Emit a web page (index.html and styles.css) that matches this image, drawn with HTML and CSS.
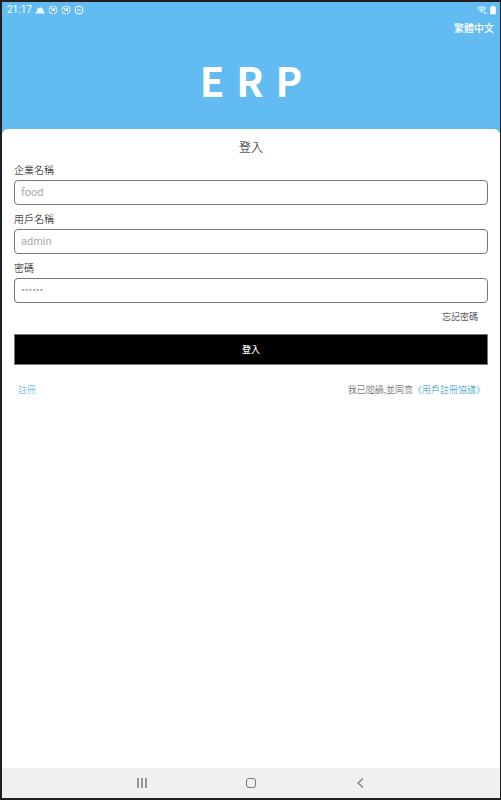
FILE: index.html
```html
<!DOCTYPE html>
<html lang="zh-Hant">
<head>
    <meta charset="UTF-8">
    <meta name="viewport" content="width=device-width, initial-scale=1.0">
    <title>ERP - 登入</title>
    <link rel="stylesheet" href="styles.css">
</head>
<body>

<div class="screen">
    <header class="header">
        <div class="status-bar">
            <div class="status-left">
                <span class="time">21:17</span>
                <svg class="status-icon" viewBox="0 0 10 10">
                    <path d="M1 8.500h8.500V6.500L8 6 8 3 6.500 3.500 5 1.500 4 3.500 2 3l.5 3L.5 7z" fill="#fff" opacity=".85"/>
                </svg>
                <svg class="status-icon" viewBox="0 0 10 10" fill="none" stroke="#fff">
                    <circle cx="5" cy="5" r="4" stroke-dasharray="5 1.280"/>
                    <path d="M3 3l1 2.500h2.500V3M4.500 2.500L6 5"/>
                </svg>
                <svg class="status-icon" viewBox="0 0 10 10" fill="none" stroke="#fff">
                    <circle cx="5" cy="5" r="4" stroke-dasharray="5 1.280"/>
                    <path d="M3 3l1 2.500h2.500V3M4.500 2.500L6 5"/>
                </svg>
                <svg class="status-icon" viewBox="0 0 10 10" fill="none" stroke="#fff">
                    <circle cx="5" cy="5" r="4"/>
                    <path d="M3 5h4"/>
                </svg>
            </div>
            <div class="status-right">
                <svg class="status-icon" viewBox="0 0 10 10">
                    <path d="M0 3C3 .5 6.500 .5 9.500 3L7.500 5.500H6V7L5 8z" fill="#fff" opacity=".6"/>
                    <path d="M1.500 4.200c2-1.500 4.500-1.500 6.500 0" fill="none" stroke="#62bcf1" stroke-width=".7"/>
                    <path d="M7.500 9V6.500M9 9V7" stroke="#fff" opacity=".8"/>
                </svg>
                <svg class="battery" viewBox="0 0 6 10">
                    <path d="M2 1h2v1h1.500v7h-5V2H2z" fill="#fff" stroke="#fff" stroke-width=".6"/>
                </svg>
            </div>
        </div>
        <a class="language" href="#">繁體中文</a>
        <h1 class="logo"><span>E</span> <span>R</span> <span>P</span></h1>
    </header>

    <main class="panel">
        <h2 class="title">登入</h2>
        <form class="login-form">
            <label for="company">企業名稱</label>
            <input type="text" id="company" placeholder="food">
            <label for="user">用戶名稱</label>
            <input type="text" id="user" placeholder="admin">
            <label for="password">密碼</label>
            <input type="password" id="password" placeholder="••••••">
            <a class="forgot" href="#">忘記密碼</a>
            <button class="login-button" type="submit">登入</button>
        </form>
        <div class="links">
            <a class="register" href="#">註冊</a>
            <p class="agreement">我已閱讀,並同意<a href="#">《用戶註冊協議》</a></p>
        </div>
    </main>

    <nav class="nav-bar">
        <button type="button" aria-label="Recents">
            <svg viewBox="0 0 12 12" stroke="#777" stroke-width="1.500"><path d="M2 1v10M6 1v10M10 1v10"/></svg>
        </button>
        <button type="button" aria-label="Home">
            <svg viewBox="0 0 12 12" fill="none" stroke="#777"><rect x="1.500" y="1.500" width="9" height="9" rx="2.500"/></svg>
        </button>
        <button type="button" aria-label="Back">
            <svg viewBox="0 0 12 12" fill="none" stroke="#777" stroke-width="1.200"><path d="M9 1.500L4 6 9 10.500"/></svg>
        </button>
    </nav>
</div>

</body>
</html>
```

FILE: styles.css
```css
* {
    box-sizing: border-box;
}
body {
    margin: 0;
    font-family: "Noto Sans CJK TC", sans-serif;
    font-size: 10px;
    font-weight: 300;
    line-height: 20px;
    color: #000;
}
a {
    text-decoration: none;
}
.screen {
    display: flex;
    flex-direction: column;
    min-height: 100vh;
    border: 2px solid #231f20;
    border-right-width: 1px;
    background-color: #62bcf1;
}
.header {
    display: flex;
    flex-direction: column;
    color: white;
}
.status-bar {
    display: flex;
    justify-content: space-between;
    height: 16px;
    padding: 0 4px 0 5px;
}
.status-left,
.status-right {
    display: flex;
    align-items: center;
    gap: 3px;
}
.time {
    font-family: Roboto, sans-serif;
    font-weight: 400;
}
.status-icon {
    width: 10px;
    height: 10px;
}
.battery {
    width: 6px;
    height: 10px;
}
.language {
    align-self: flex-end;
    padding-right: 6px;
    color: white;
    font-weight: 500;
}
.logo {
    display: flex;
    justify-content: center;
    gap: 12px;
    margin: 0;
    padding: 16px 0 23px;
    font-size: 40px;
    line-height: 52px;
}
.panel {
    flex: 1;
    padding: 8px 12px;
    background-color: white;
    border-radius: 6px 6px 0 0;
}
.title {
    margin: 0 0 3px;
    font-size: 12px;
    font-weight: 300;
    text-align: center;
}
.login-form {
    display: flex;
    flex-direction: column;
}
.login-form input {
    width: 100%;
    height: 25px;
    margin-bottom: 4px;
    padding: 0 6px;
    border: 1px solid #777;
    border-radius: 4px;
    font-family: Roboto, sans-serif;
    font-size: 11px;
    background-color: white;
}
.login-form input::placeholder {
    color: #aaa;
}
.forgot {
    align-self: flex-end;
    margin-bottom: 7px;
    padding-right: 10px;
    font-size: 9px;
    color: #000;
}
.login-button {
    height: 31px;
    border: 1px solid #777;
    background-color: black;
    color: white;
    font-family: inherit;
    font-size: 9px;
    font-weight: 500;
    cursor: pointer;
}
.links {
    display: flex;
    justify-content: space-between;
    margin-top: 15px;
    padding: 0 3px 0 4px;
    font-size: 9px;
}
.register {
    color: #4bb3ee;
}
.agreement {
    margin: 0;
    color: #444;
}
.agreement a {
    color: #158fc4;
}
.nav-bar {
    display: flex;
    justify-content: center;
    gap: 85px;
    padding: 3px 0;
    background-color: #f0f0f0;
}
.nav-bar button {
    display: flex;
    align-items: center;
    justify-content: center;
    width: 24px;
    height: 24px;
    padding: 0;
    border: none;
    background: none;
}
.nav-bar svg {
    width: 12px;
    height: 12px;
}
```
